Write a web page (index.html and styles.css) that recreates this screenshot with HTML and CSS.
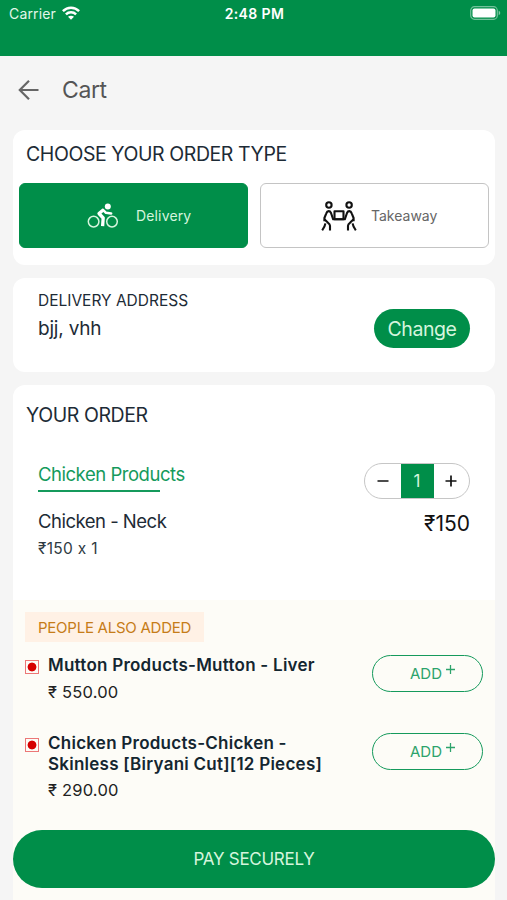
FILE: index.html
```html
<!DOCTYPE html>
<html lang="en">
<head>
<meta charset="utf-8">
<meta name="viewport" content="width=device-width, initial-scale=1">
<title>Cart</title>
<link rel="stylesheet" href="styles.css">
</head>
<body>
<div class="screen">
  <header class="status">
    <div class="carrier"><span>Carrier</span>
      <svg class="wifi" viewBox="0 0 18 14"><g fill="none" stroke="#fff" stroke-width="2.5"><path d="M.9 5.100C5.500.5 12.500.5 17.100 5.100"/><path d="M3.900 8.400c2.900-2.800 7.300-2.800 10.200 0"/></g><path fill="#fff" d="M6 10.800c1.700-1.500 4.300-1.500 6 0L9 13.800z"/></svg>
    </div>
    <div class="clock">2:48 PM</div>
    <svg class="battery" viewBox="0 0 31 14"><rect x=".7" y=".7" width="26.600" height="12.600" rx="3.800" fill="none" stroke="#fff" stroke-opacity=".45" stroke-width="1.200"/><rect x="2.500" y="2.500" width="23" height="9" rx="2" fill="#fff"/><path d="M28.700 4.800c2 .7 2 3.700 0 4.400z" fill="#fff" fill-opacity=".5"/></svg>
  </header>

  <nav class="titlebar">
    <svg class="back" viewBox="0 0 22 22"><path d="M20.500 11H2M11 1.800 1.800 11l9.200 9.200" fill="none" stroke="#666" stroke-width="2.200"/></svg>
    <h1>Cart</h1>
  </nav>

  <main class="content">
    <section class="card type-card">
      <h2 class="heading choose">CHOOSE YOUR ORDER TYPE</h2>
      <div class="types">
        <button class="type active">
          <svg class="bike" viewBox="0 0 32 26"><g fill="none" stroke="#d5f5dd" stroke-width="1.500"><circle cx="6.600" cy="18.600" r="5.300"/><circle cx="25" cy="18.600" r="5.300"/></g><circle cx="20.800" cy="3.400" r="3" fill="#fff"/><path d="M16.500 6.800 12 10.500l4.200 4.500-.6 8.200" fill="none" stroke="#fff" stroke-width="3.300" stroke-linejoin="round"/><path d="M16 6.800 19 9.800l5.200.6" fill="none" stroke="#fff" stroke-width="2.500" stroke-linecap="round" stroke-linejoin="round"/></svg>
          <span>Delivery</span>
        </button>
        <button class="type">
          <svg class="carry" viewBox="0 0 36 30"><g fill="none" stroke="#111" stroke-width="2.100" stroke-linejoin="round"><g id="person"><circle cx="7.900" cy="4" r="2.700"/><path d="M3.400 20.200V17L5.300 12.300C6.300 9.500 8.900 9.500 10 12l2.200 6.300h5.800"/><path d="M3.400 18.300 6.800 21.600c1.500 1 2.200 1.600 2.200 3.200v4.700"/><path d="M4.400 22.300c-.4 3-1.700 4.800-3.200 7"/></g><use href="#person" transform="matrix(-1 0 0 1 36 0)"/><path d="M13.500 10.200h9v8h-9z"/></g></svg>
          <span>Takeaway</span>
        </button>
      </div>
    </section>

    <section class="card address">
      <div>
        <p class="label">DELIVERY ADDRESS</p>
        <p class="place">bjj, vhh</p>
      </div>
      <button class="change">Change</button>
    </section>

    <section class="card order">
      <h2 class="heading your">YOUR ORDER</h2>
      <div class="line">
        <div>
          <p class="category">Chicken Products</p>
          <div class="rule"></div>
          <p class="name">Chicken - Neck</p>
          <p class="calc">₹150 x 1</p>
        </div>
        <div class="side">
          <div class="stepper">
            <button aria-label="Decrease"><svg viewBox="0 0 12 12"><path d="M.5 6h11"/></svg></button>
            <span class="qty">1</span>
            <button aria-label="Increase"><svg viewBox="0 0 12 12"><path d="M.5 6h11M6 .5v11"/></svg></button>
          </div>
          <p class="total">₹150</p>
        </div>
      </div>

      <div class="also">
        <div class="tag">PEOPLE ALSO ADDED</div>
        <div class="item">
          <i class="dot"></i>
          <div class="info"><p class="product">Mutton Products-Mutton - Liver</p><p class="price">₹ 550.00</p></div>
          <button class="add"><span>ADD</span><svg viewBox="0 0 10 10"><path d="M0 5h10M5 0v10"/></svg></button>
        </div>
        <div class="item">
          <i class="dot"></i>
          <div class="info"><p class="product">Chicken Products-Chicken -<br>Skinless [Biryani Cut][12 Pieces]</p><p class="price">₹ 290.00</p></div>
          <button class="add"><span>ADD</span><svg viewBox="0 0 10 10"><path d="M0 5h10M5 0v10"/></svg></button>
        </div>
      </div>
    </section>
  </main>
  <button class="pay"><span>PAY SECURELY</span></button>
</div>
</body>
</html>
```
FILE: styles.css
```css
* { box-sizing: border-box; }
body { margin: 0; }
h1, h2, p { margin: 0; font-weight: 400; }
button { font: inherit; letter-spacing: inherit; margin: 0; padding: 0; border: 0; background: none; color: inherit; }
svg { display: block; flex: none; }

.screen {
  position: relative;
  width: 507px;
  height: 900px;
  overflow: hidden;
  display: flex;
  flex-direction: column;
  background: #f5f5f5;
  color: #1d2b36;
  font-family: Inter, "Noto Sans", sans-serif;
  font-feature-settings: "calt" 0;
}

.status {
  height: 56px;
  flex: none;
  display: grid;
  grid-template-columns: 1fr auto 1fr;
  align-items: start;
  padding: 5px 6px 0 9px;
  background: #008e49;
  color: #fff;
  font-size: 14px;
  line-height: 18px;
}
.carrier { display: flex; gap: 6px; color: #e3f7ea; letter-spacing: .15px; }
.wifi { width: 18px; height: 14px; margin-top: 1px; }
.clock { font-weight: 600; letter-spacing: .4px; margin-left: -1px; }
.battery { width: 31px; height: 14px; justify-self: end; margin-top: 1px; }

.titlebar { height: 74px; flex: none; display: flex; align-items: center; padding: 0 18px 6px; gap: 22px; }
.back { width: 22px; height: 22px; }
h1 { font-size: 23px; line-height: 30px; color: #555; letter-spacing: -.4px; }

.content { display: flex; flex-direction: column; gap: 13px; padding: 0 12px 0 13px; flex: 1; }
.card { background: #fff; border-radius: 12px; }
.heading { font-size: 19.500px; line-height: 24px; letter-spacing: -.42px; }

.type-card { height: 135px; padding: 12px 6px 0; flex: none; }
.choose { padding-left: 7px; }
.types { display: grid; grid-template-columns: 1fr 1fr; gap: 12px; margin-top: 17px; }
.type {
  height: 65px;
  display: flex;
  align-items: center;
  border: 1px solid #c4c4c4;
  border-radius: 6px;
  padding-left: 60px;
  gap: 14px;
  color: #666;
  font-size: 14px;
}
.type.active { background: #008e49; border-color: #008e49; color: #d5f5dd; padding-left: 67px; gap: 17px; letter-spacing: .15px; }
.bike { width: 32px; height: 26px; }
.carry { width: 36px; height: 30px; }

.address { height: 94px; flex: none; display: flex; justify-content: space-between; padding: 12px 25px 0; }
.label { font-size: 15.500px; line-height: 20px; padding-top: 1px; }
.place { font-size: 19px; line-height: 24px; margin-top: 6px; letter-spacing: -.2px; }
.change { width: 96px; height: 39px; margin-top: 19px; border-radius: 20px; background: #008e49; color: #d5f5dd; font-size: 19.500px; letter-spacing: -.4px; }

.order { flex: none; padding-top: 18px; height: 540px; }
.your { padding-left: 13px; }
.line { display: flex; justify-content: space-between; padding: 36px 25px 0; height: 173px; }
.category { font-size: 18.500px; line-height: 22px; color: #159a5c; letter-spacing: -.47px; }
.rule { width: 122px; height: 2px; margin-top: 5px; background: #159a5c; }
.name { font-size: 18.500px; line-height: 24px; margin-top: 17px; letter-spacing: -.5px; }
.calc { font-size: 15.500px; line-height: 20px; margin-top: 6px; color: #2f3b44; letter-spacing: .3px; }
.side { display: flex; flex-direction: column; align-items: flex-end; }
.stepper { display: flex; width: 106px; height: 36px; border: 1px solid #c6c6c6; border-radius: 18px; overflow: hidden; }
.stepper button { flex: 1; display: grid; place-items: center; }
.stepper svg { width: 12px; height: 12px; stroke: #111; stroke-width: 1.700; }
.qty { width: 33px; background: #008e49; color: #d5f5dd; font-size: 17px; line-height: 34px; text-align: center; }
.total { font-size: 21px; line-height: 24px; color: #111; margin-top: 13px; }

.also { background: #fdfcf7; padding: 12px 12px 0; height: 325px; }
.tag { width: 179px; height: 30px; background: #fff1e5; color: #c67c18; padding-left: 13px; font-size: 15px; line-height: 31px; white-space: nowrap; letter-spacing: -.25px; }
.item { display: flex; height: 78px; padding-top: 13px; }
.dot { width: 14px; height: 14px; flex: none; margin: 5px 9px 0 0; border: 1px solid #ec7777; background: radial-gradient(circle, #d60000 4px, transparent 4.800px); }
.info { flex: 1; white-space: nowrap; }
.product { font-size: 17px; line-height: 20.500px; font-weight: 600; color: #142630; letter-spacing: .25px; }
.price { font-size: 16.500px; line-height: 20px; margin-top: 6px; color: #222; letter-spacing: .2px; }
.add { width: 111px; height: 37px; flex: none; display: flex; align-items: center; padding-left: 37px; gap: 4px; border: 1px solid #159a5c; border-radius: 19px; color: #2da36b; font-size: 15px; }
.add svg { width: 9px; height: 9px; margin-bottom: 9px; stroke: #2da36b; stroke-width: 1.400; }

.pay { position: absolute; left: 13px; bottom: 12px; width: 482px; height: 58px; border-radius: 29px; background: #008e49; color: #d5f5dd; font-size: 17px; letter-spacing: -.28px; }
```
